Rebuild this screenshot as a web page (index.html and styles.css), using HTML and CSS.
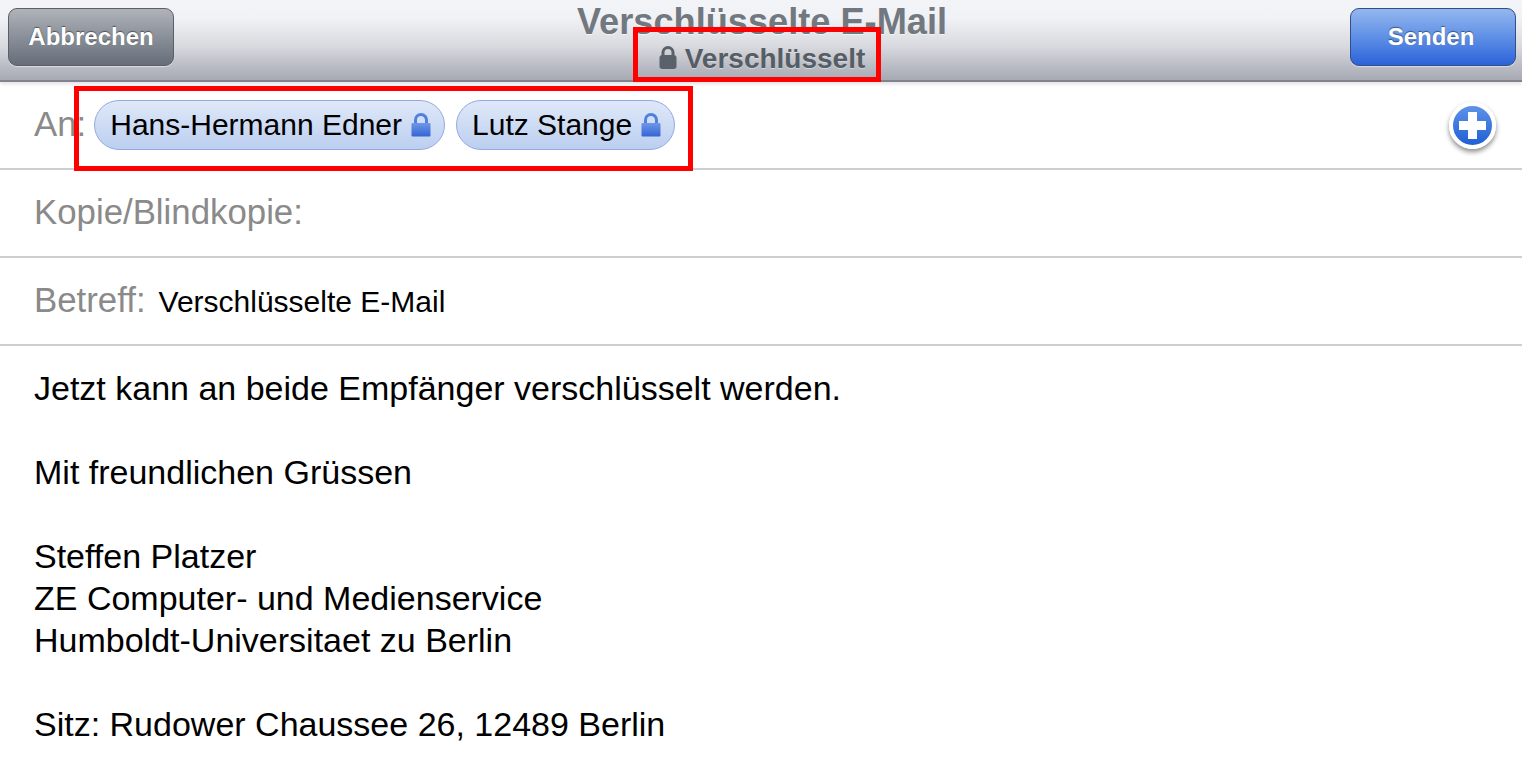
FILE: index.html
```html
<!DOCTYPE html>
<html lang="de">
<head>
    <meta charset="UTF-8">
    <meta name="viewport" content="width=device-width, initial-scale=1.0">
    <title>Verschlüsselte E-Mail</title>
    <link rel="stylesheet" href="styles.css">
</head>
<body>
    <!-- Top bar -->
    <div class="top-bar">
        <a href="#" class="bar-button cancel-button">Abbrechen</a>
        <div class="title-block">
            <div class="title">Verschlüsselte E-Mail</div>
            <div class="subtitle">
                <svg class="subtitle-lock" viewBox="0 0 18 23" width="18" height="23">
                    <path d="M4 11V6.500a5 5 0 0 1 10 0V11" fill="none" stroke="#5a6169" stroke-width="3"/>
                    <rect x="0.500" y="9" width="17" height="14" rx="3" fill="#5a6169"/>
                </svg>
                Verschlüsselt
            </div>
            <div class="red-box subtitle-box"></div>
        </div>
        <a href="#" class="bar-button send-button">Senden</a>
    </div>

    <!-- Address rows -->
    <div class="field-row to-row">
        <span class="field-label">An:</span>
        <div class="chips">
            <span class="chip">Hans-Hermann Edner
                <svg class="chip-lock" viewBox="0 0 20 24" width="20" height="24">
                    <defs>
                        <linearGradient id="lockfill" x1="0" y1="0" x2="0" y2="1">
                            <stop offset="0" stop-color="#6f97e6"/>
                            <stop offset="1" stop-color="#3465d4"/>
                        </linearGradient>
                    </defs>
                    <path d="M4.500 12V7a5.500 5.500 0 0 1 11 0v5" fill="none" stroke="#4f7fdf" stroke-width="3"/>
                    <rect x="0.500" y="10" width="19" height="13.500" rx="1" fill="url(#lockfill)"/>
                </svg>
            </span>
            <span class="chip">Lutz Stange
                <svg class="chip-lock" viewBox="0 0 20 24" width="20" height="24">
                    <path d="M4.500 12V7a5.500 5.500 0 0 1 11 0v5" fill="none" stroke="#4f7fdf" stroke-width="3"/>
                    <rect x="0.500" y="10" width="19" height="13.500" rx="1" fill="url(#lockfill)"/>
                </svg>
            </span>
            <div class="red-box chips-box"></div>
        </div>
        <div class="add-button">
            <svg viewBox="0 0 27 27" width="27" height="27">
                <path d="M9 0h9v9h9v9h-9v9H9v-9H0V9h9z" fill="#fff"/>
            </svg>
        </div>
    </div>
    <div class="field-row">
        <span class="field-label">Kopie/Blindkopie:</span>
    </div>
    <div class="field-row">
        <span class="field-label">Betreff:</span>
        <span class="subject">Verschlüsselte E-Mail</span>
    </div>

    <!-- Message body -->
    <div class="message">
        <p>Jetzt kann an beide Empfänger verschlüsselt werden.</p>
        <p>Mit freundlichen Grüssen</p>
        <p>Steffen Platzer<br>ZE Computer- und Medienservice<br>Humboldt-Universitaet zu Berlin</p>
        <p>Sitz: Rudower Chaussee 26, 12489 Berlin</p>
    </div>
</body>
</html>
```

FILE: styles.css
```css
/* Basic reset */
* {
    margin: 0;
    padding: 0;
    box-sizing: border-box;
}

html, body {
    height: 100%;
    overflow: hidden;
}

body {
    background-color: #fff;
    color: #000;
    font-family: 'Liberation Sans', Arial, sans-serif;
}

/* Top bar */
.top-bar {
    height: 82px;
    padding: 8px 6px 0 8px;
    display: flex;
    justify-content: space-between;
    align-items: flex-start;
    background: linear-gradient(#f3f4f7 0, #f1f2f5 18px, #d8dadf 46px, #a6a8b3 80px);
    border-bottom: 2px solid #82838f;
    box-shadow: 0 2px 4px rgba(0, 0, 0, 0.12);
    position: relative;
}

.bar-button {
    width: 166px;
    height: 58px;
    border-radius: 9px;
    display: flex;
    align-items: center;
    justify-content: center;
    color: #fff;
    font-size: 24px;
    font-weight: bold;
    text-decoration: none;
    text-shadow: 0 -1px 1px rgba(0, 0, 0, 0.45);
    box-shadow: 0 1px 1px rgba(255, 255, 255, 0.5);
}

.cancel-button {
    background: linear-gradient(#b0b3b9, #8a9099 50%, #666d78);
    border: 1px solid #596069;
}

.send-button {
    padding-right: 4px;
    background: linear-gradient(#94b7ee, #5f90e6 50%, #2b62d8);
    border: 1px solid #2f4f86;
}

/* Title */
.title-block {
    position: relative;
    margin-top: -7px;
    display: flex;
    flex-direction: column;
    align-items: center;
}

.title {
    font-size: 36.200px;
    line-height: 42px;
    font-weight: bold;
    color: #717880;
    text-shadow: 0 1px 0 rgba(255, 255, 255, 0.6);
}

.subtitle {
    display: flex;
    align-items: center;
    gap: 8px;
    font-size: 28px;
    line-height: 32px;
    font-weight: bold;
    color: #565d65;
    text-shadow: 0 1px 0 rgba(255, 255, 255, 0.4);
}

.subtitle-lock {
    margin-bottom: 3px;
}

/* Red callouts painted over the screenshot */
.red-box {
    position: absolute;
    border: 5px solid #fe0000;
}

.subtitle-box {
    left: 56px;
    top: 26px;
    width: 248px;
    height: 55px;
}

.chips-box {
    left: -20px;
    top: -14px;
    width: 619px;
    height: 85px;
}

/* Address rows */
.field-row {
    height: 88px;
    padding: 0 26px 0 34px;
    display: flex;
    align-items: center;
    border-bottom: 2px solid #cfcfcf;
    font-size: 34.800px;
}

.field-label {
    margin-bottom: 2px;
    color: #8a8a8a;
}

.chips {
    position: relative;
    display: flex;
    gap: 11px;
    margin-left: 8px;
}

.chip {
    height: 50px;
    padding: 0 13px 0 15px;
    display: flex;
    align-items: center;
    gap: 9px;
    font-size: 30px;
    border: 1px solid #93a9e0;
    border-radius: 25px;
    background: linear-gradient(#dfe8f8, #bccff0);
}

.chip-lock {
    flex: none;
}

.add-button {
    margin-left: auto;
    width: 47px;
    height: 47px;
    display: flex;
    align-items: center;
    justify-content: center;
    border: 4px solid #fff;
    border-radius: 50%;
    background: linear-gradient(#5f93e6, #1f5fd6);
    box-shadow: 0 3px 5px rgba(0, 0, 0, 0.45);
}

.subject {
    margin-left: 13px;
    margin-top: 2px;
    font-size: 30px;
}

/* Message body */
.message {
    padding: 21px 34px 0;
    font-size: 34px;
    line-height: 42px;
}

.message p {
    margin-bottom: 42px;
}
```
